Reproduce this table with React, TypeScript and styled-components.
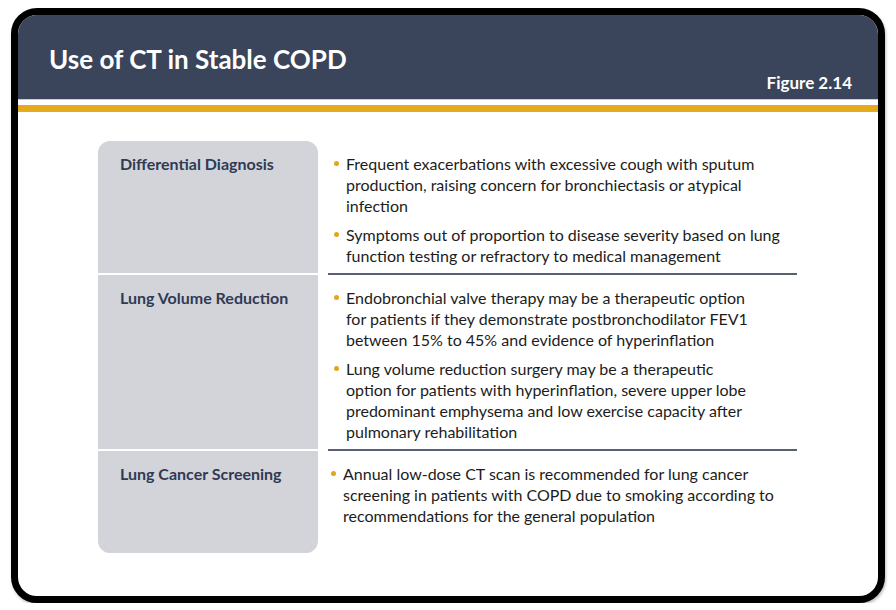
import React from 'react';
import styled, { createGlobalStyle } from 'styled-components';

interface Section {
    label: string;
    items: string[][];
    indent?: number;
    minHeight?: number;
}

const sections: Section[] = [
    {
        label: 'Differential Diagnosis',
        items: [
            [
                'Frequent exacerbations with excessive cough with sputum',
                'production, raising concern for bronchiectasis or atypical',
                'infection',
            ],
            [
                'Symptoms out of proportion to disease severity based on lung',
                'function testing or refractory to medical management',
            ],
        ],
    },
    {
        label: 'Lung Volume Reduction',
        items: [
            [
                'Endobronchial valve therapy may be a therapeutic option',
                'for patients if they demonstrate postbronchodilator FEV1',
                'between 15% to 45% and evidence of hyperinflation',
            ],
            [
                'Lung volume reduction surgery may be a therapeutic',
                'option for patients with hyperinflation, severe upper lobe',
                'predominant emphysema and low exercise capacity after',
                'pulmonary rehabilitation',
            ],
        ],
    },
    {
        label: 'Lung Cancer Screening',
        indent: -3,
        minHeight: 104,
        items: [
            [
                'Annual low-dose CT scan is recommended for lung cancer',
                'screening in patients with COPD due to smoking according to',
                'recommendations for the general population',
            ],
        ],
    },
];

const App: React.FC = () => {
    return (
        <>
            <GlobalStyle />
            <Frame>
                <Header>
                    <Title>Use of CT in Stable COPD</Title>
                    <FigureTag>Figure 2.14</FigureTag>
                </Header>
                <GoldRule />
                <Content>
                    <Table>
                        {sections.map((s, i) => (
                            <React.Fragment key={s.label}>
                                <LabelCell
                                    $first={i === 0}
                                    $last={i === sections.length - 1}
                                    $minHeight={s.minHeight}
                                >
                                    {s.label}
                                </LabelCell>
                                <BodyCell $first={i === 0}>
                                    <BulletList>
                                        {s.items.map((lines, j) => (
                                            <Bullet key={j} $indent={s.indent ?? 0}>
                                                {lines.map((line, k) => (
                                                    <Line key={k}>{line}</Line>
                                                ))}
                                            </Bullet>
                                        ))}
                                    </BulletList>
                                </BodyCell>
                            </React.Fragment>
                        ))}
                    </Table>
                </Content>
            </Frame>
        </>
    );
};

export default App;

const GlobalStyle = createGlobalStyle`
  body {
    margin: 0;
    background: #ffffff;
    font-family: Lato, "Open Sans", sans-serif;
  }
`;

const Frame = styled.div`
  box-sizing: border-box;
  margin: 8px 0 0 11px;
  width: 874px;
  height: 595px;
  border: 7px solid #000000;
  border-radius: 26px;
  overflow: hidden;
  background: #ffffff;
  display: flex;
  flex-direction: column;
  box-shadow: 1px 2px 3px rgba(0, 0, 0, 0.25);
`;

const Header = styled.div`
  height: 85px;
  flex-shrink: 0;
  box-sizing: border-box;
  padding: 28px 26px 0 31px;
  background: #3a445a;
  display: flex;
  flex-direction: column;
  border-bottom: 1px solid #c9ccd3;
`;

const Title = styled.h1`
  margin: 0;
  color: #ffffff;
  font-size: 26px;
  line-height: 32px;
  font-weight: 700;
`;

const FigureTag = styled.div`
  align-self: flex-end;
  margin-top: -2px;
  color: #ffffff;
  font-size: 17px;
  line-height: 20px;
  font-weight: 700;
`;

const GoldRule = styled.div`
  flex-shrink: 0;
  height: 7px;
  margin-top: 5px;
  background: #e5ab1c;
`;

const Content = styled.div`
  padding: 29px 0 0 80px;
`;

const Table = styled.div`
  display: grid;
  grid-template-columns: 220px 469px;
  column-gap: 10px;
`;

const LabelCell = styled.div<{ $first: boolean; $last: boolean; $minHeight?: number }>`
  box-sizing: border-box;
  padding: 12px 22px;
  background: #d3d4d9;
  color: #2f3a54;
  font-size: 16px;
  line-height: 21px;
  font-weight: 700;
  white-space: nowrap;
  border-top: ${p => (p.$first ? 'none' : '2px solid #ffffff')};
  border-radius: ${p => (p.$first ? '12px 12px 0 0' : p.$last ? '0 0 12px 12px' : '0')};
  min-height: ${p => (p.$minHeight ? `${p.$minHeight}px` : 'auto')};
`;

const BodyCell = styled.div<{ $first: boolean }>`
  padding: 12px 0 7px;
  border-top: ${p => (p.$first ? 'none' : '2px solid #596073')};
`;

const BulletList = styled.ul`
  margin: 0;
  padding: 0;
  list-style: none;
  display: flex;
  flex-direction: column;
  gap: 8px;
`;

const Bullet = styled.li<{ $indent: number }>`
  position: relative;
  padding-left: ${p => 18 + p.$indent}px;
  color: #1c1c1c;
  font-size: 16px;
  line-height: 21px;

  &::before {
    content: '';
    position: absolute;
    left: ${p => 6 + p.$indent}px;
    top: 8px;
    width: 5px;
    height: 5px;
    border-radius: 50%;
    background: #e5a51a;
  }
`;

const Line = styled.span`
  display: block;
  white-space: nowrap;
`;
